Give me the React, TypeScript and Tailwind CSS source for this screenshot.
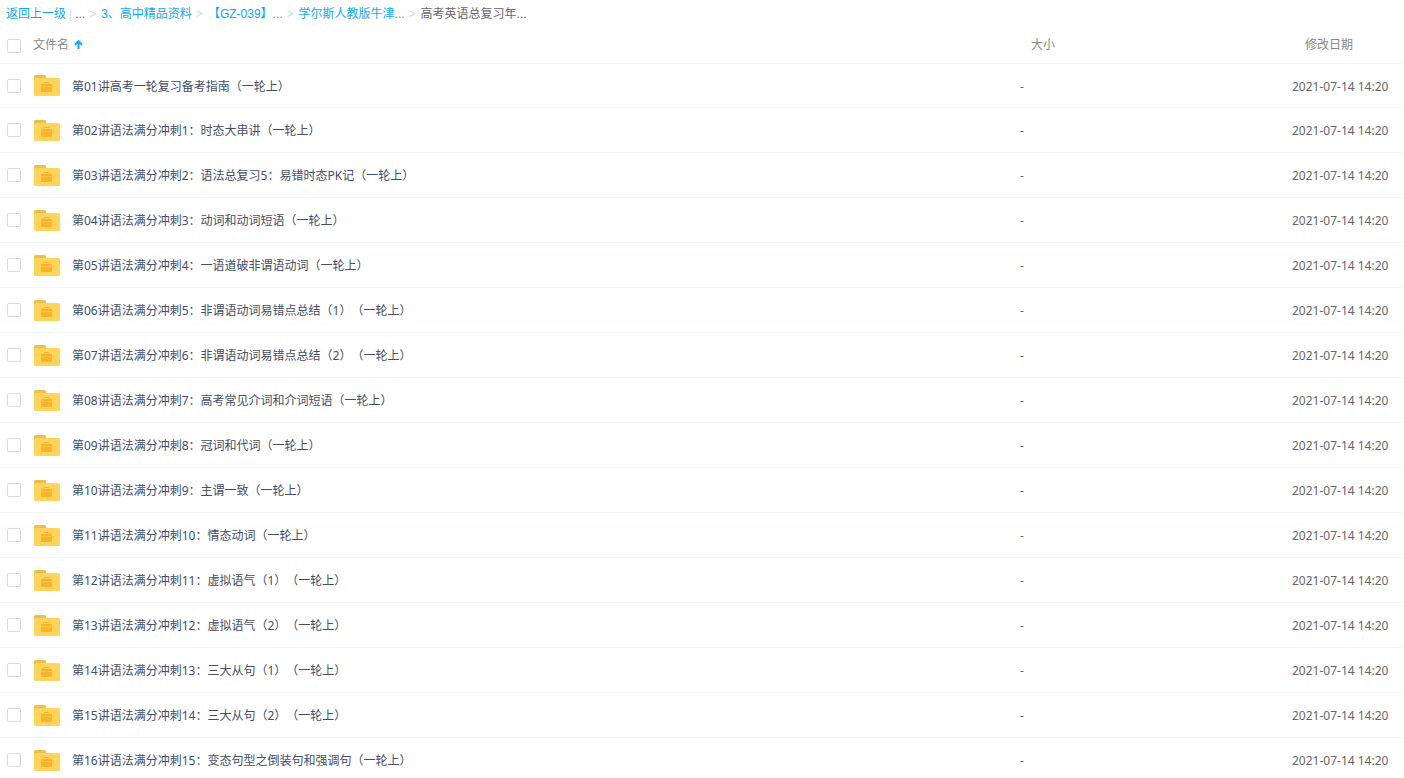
import { useState } from "react";

const FILES = [
  "第01讲高考一轮复习备考指南（一轮上）",
  "第02讲语法满分冲刺1：时态大串讲（一轮上）",
  "第03讲语法满分冲刺2：语法总复习5：易错时态PK记（一轮上）",
  "第04讲语法满分冲刺3：动词和动词短语（一轮上）",
  "第05讲语法满分冲刺4：一语道破非谓语动词（一轮上）",
  "第06讲语法满分冲刺5：非谓语动词易错点总结（1）（一轮上）",
  "第07讲语法满分冲刺6：非谓语动词易错点总结（2）（一轮上）",
  "第08讲语法满分冲刺7：高考常见介词和介词短语（一轮上）",
  "第09讲语法满分冲刺8：冠词和代词（一轮上）",
  "第10讲语法满分冲刺9：主谓一致（一轮上）",
  "第11讲语法满分冲刺10：情态动词（一轮上）",
  "第12讲语法满分冲刺11：虚拟语气（1）（一轮上）",
  "第13讲语法满分冲刺12：虚拟语气（2）（一轮上）",
  "第14讲语法满分冲刺13：三大从句（1）（一轮上）",
  "第15讲语法满分冲刺14：三大从句（2）（一轮上）",
  "第16讲语法满分冲刺15：变态句型之倒装句和强调句（一轮上）",
];

const CRUMBS = ["3、高中精品资料", "【GZ-039】...", "学尔斯人教版牛津..."];

function FolderIcon() {
  return (
    <svg width="26" height="21" viewBox="0 0 26 21" className="shrink-0" aria-hidden="true">
      <path d="M0 6V1.5A1.5 1.5 0 0 1 1.500 0H10.500A1.500 1.500 0 0 1 12 1.500V6Z" fill="#ecbe4a" />
      <rect y="3" width="26" height="18" rx="1.500" fill="#ffd459" />
      <path d="M9.500 9.500V8.500A1 1 0 0 1 10.500 7.500H14.500A1 1 0 0 1 15.500 8.500V9.500" fill="none" stroke="#f5b32e" />
      <path d="M7 10A1 1 0 0 1 8 9H17A1 1 0 0 1 18 10V16A1 1 0 0 1 17 17H8A1 1 0 0 1 7 16Z" fill="#f5b32e" />
      <path d="M7 11.500H20" stroke="#fcc63c" />
    </svg>
  );
}

function Tick({ label, checked, onChange }: { label: string; checked: boolean; onChange: () => void }) {
  return (
    <input
      type="checkbox"
      aria-label={label}
      checked={checked}
      onChange={onChange}
      className="size-3.5 shrink-0 appearance-none rounded-xs border border-[#d5dae3] bg-white checked:border-[#09aaff] checked:bg-[#09aaff]"
    />
  );
}

function Separator() {
  return <span className="pr-[5px] pl-1 text-[#c4dbfe]">&gt;</span>;
}

export default function App() {
  const [selected, setSelected] = useState<number[]>([]);
  const all = selected.length === FILES.length;
  const toggle = (i: number) =>
    setSelected((s) => (s.includes(i) ? s.filter((n) => n !== i) : [...s, i]));

  return (
    <main className="h-screen overflow-y-auto bg-white font-['Noto_Sans','Noto_Sans_CJK_SC',sans-serif] text-xs [scrollbar-width:none] [text-spacing-trim:space-all]">
      <nav className="flex h-7 items-center pl-1.5 font-['Liberation_Sans','Noto_Sans_CJK_SC',sans-serif] whitespace-nowrap text-[#09aaff]">
        <a href="#back">返回上一级</a>
        <span className="px-[3px] text-[#c4dbfe]">|</span>
        <span className="text-[#666666]">...</span>
        {CRUMBS.map((c) => (
          <span key={c} className="flex">
            <Separator />
            <a href="#folder">{c}</a>
          </span>
        ))}
        <Separator />
        <span className="text-[#666666]">高考英语总复习年...</span>
      </nav>
      <table className="w-full table-fixed border-separate border-spacing-0 text-left">
        <thead>
          <tr className="text-[#888888] *:h-9 *:border-b *:border-[#f2f6fd] *:p-0 *:font-normal">
            <th>
              <div className="flex items-center pl-[7px]">
                <Tick
                  label="全选"
                  checked={all}
                  onChange={() => setSelected(all ? [] : FILES.map((_, i) => i))}
                />
                <button type="button" className="ml-3 flex items-center gap-[5px] pb-0.5">
                  文件名
                  <svg width="9" height="9" viewBox="0 0 9 9" aria-hidden="true">
                    <path d="M4.500 9V1.500M1 4.700L4.500 1.200L8 4.700" fill="none" stroke="#09aaff" strokeWidth="2" />
                  </svg>
                </button>
              </div>
            </th>
            <th className="w-[272px]"><div className="pb-0.5 pl-[11px]">大小</div></th>
            <th className="w-28"><div className="pb-0.5 pl-[13px]">修改日期</div></th>
          </tr>
        </thead>
        <tbody>
          {FILES.map((name, i) => (
            <tr key={name} className="text-[#666666] *:h-[45px] *:border-b *:border-[#f2f6fd] *:p-0 first:*:h-11">
              <td>
                <div className="flex items-center pl-[7px]">
                  <Tick label={name} checked={selected.includes(i)} onChange={() => toggle(i)} />
                  <span className="ml-[13px] flex min-w-0 items-center gap-3">
                    <FolderIcon />
                    <a href="#file" className="truncate pt-0.5 text-[#424e67]">{name}</a>
                  </span>
                </div>
              </td>
              <td><div className="pt-0.5">-</div></td>
              <td><div className="pt-0.5 whitespace-nowrap">2021-07-14 14:20</div></td>
            </tr>
          ))}
        </tbody>
      </table>
    </main>
  );
}
